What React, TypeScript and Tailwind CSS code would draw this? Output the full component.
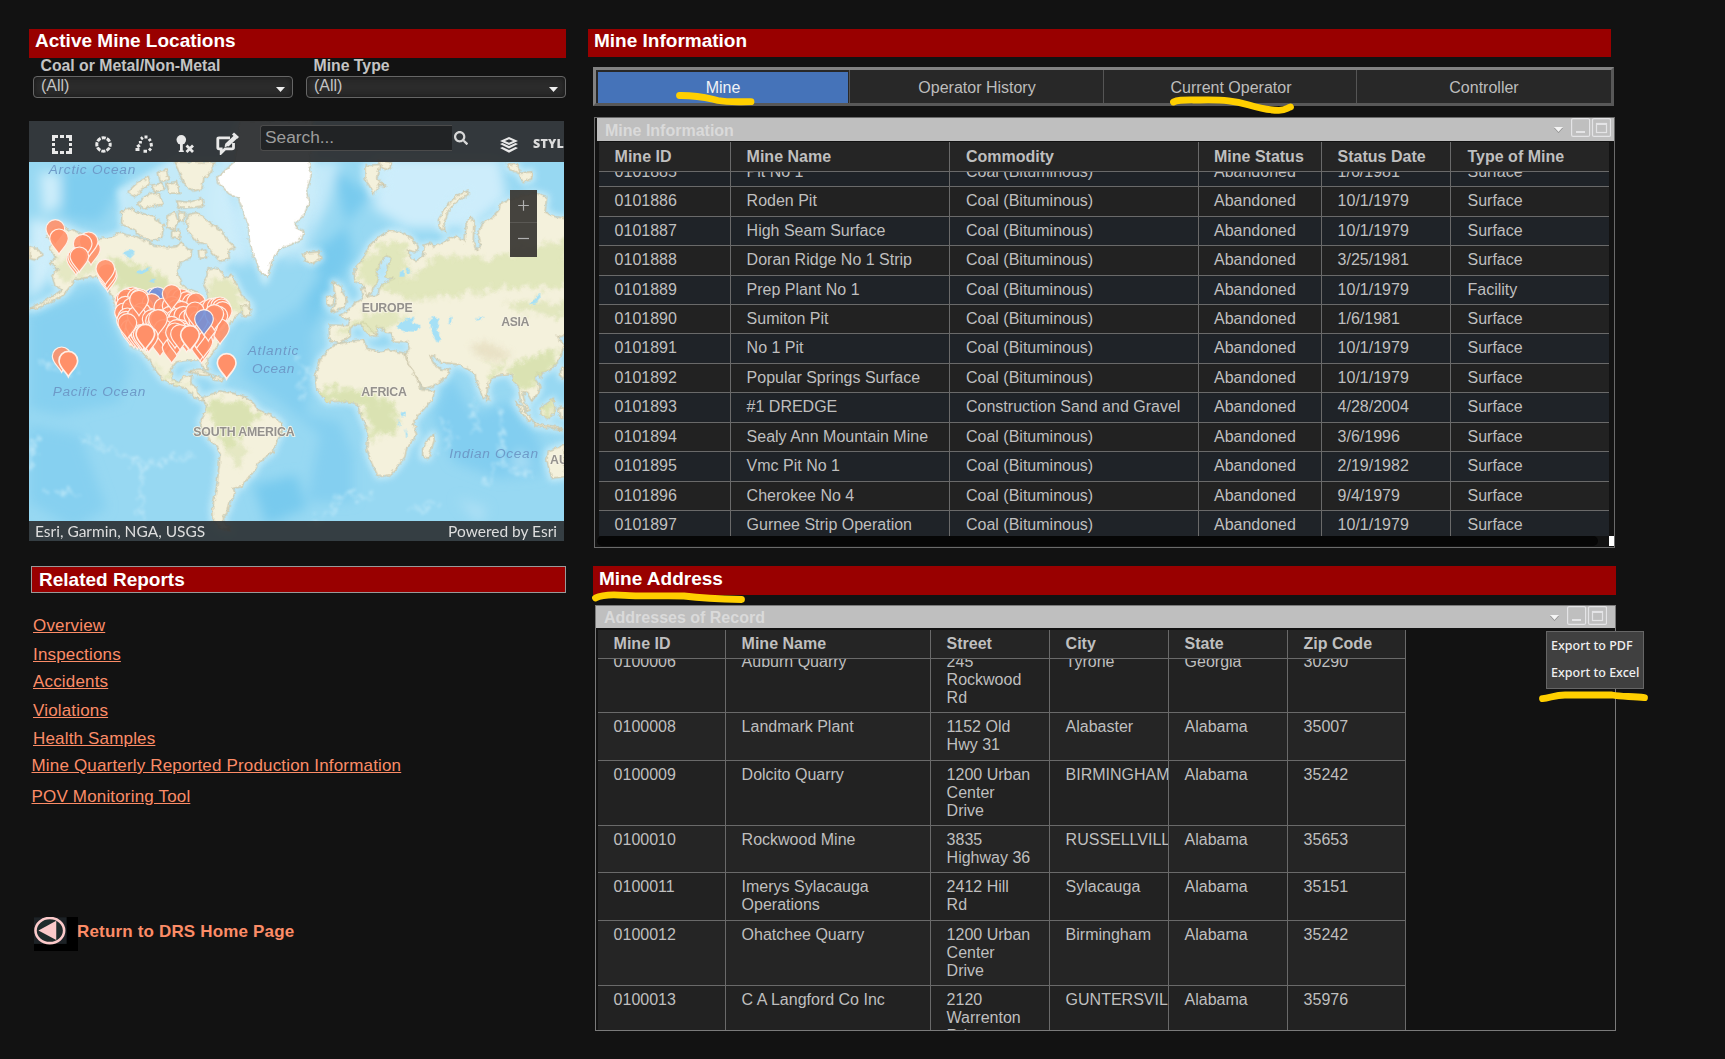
import React from "react";
import { FaSearch } from "react-icons/fa";

const mineCols = ["Mine ID", "Mine Name", "Commodity", "Mine Status", "Status Date", "Type of Mine"];
const mines = [
  ["0101885", "Pit No 1", "Coal (Bituminous)", "Abandoned", "1/6/1981", "Surface"],
  ["0101886", "Roden Pit", "Coal (Bituminous)", "Abandoned", "10/1/1979", "Surface"],
  ["0101887", "High Seam Surface", "Coal (Bituminous)", "Abandoned", "10/1/1979", "Surface"],
  ["0101888", "Doran Ridge No 1 Strip", "Coal (Bituminous)", "Abandoned", "3/25/1981", "Surface"],
  ["0101889", "Prep Plant No 1", "Coal (Bituminous)", "Abandoned", "10/1/1979", "Facility"],
  ["0101890", "Sumiton Pit", "Coal (Bituminous)", "Abandoned", "1/6/1981", "Surface"],
  ["0101891", "No 1 Pit", "Coal (Bituminous)", "Abandoned", "10/1/1979", "Surface"],
  ["0101892", "Popular Springs Surface", "Coal (Bituminous)", "Abandoned", "10/1/1979", "Surface"],
  ["0101893", "#1 DREDGE", "Construction Sand and Gravel", "Abandoned", "4/28/2004", "Surface"],
  ["0101894", "Sealy Ann Mountain Mine", "Coal (Bituminous)", "Abandoned", "3/6/1996", "Surface"],
  ["0101895", "Vmc Pit No 1", "Coal (Bituminous)", "Abandoned", "2/19/1982", "Surface"],
  ["0101896", "Cherokee No 4", "Coal (Bituminous)", "Abandoned", "9/4/1979", "Surface"],
  ["0101897", "Gurnee Strip Operation", "Coal (Bituminous)", "Abandoned", "10/1/1979", "Surface"],
];

const addressCols = ["Mine ID", "Mine Name", "Street", "City", "State", "Zip Code"];
const addresses = [
  ["0100006", "Auburn Quarry", "245\nRockwood\nRd", "Tyrone", "Georgia", "30290"],
  ["0100008", "Landmark Plant", "1152 Old\nHwy 31", "Alabaster", "Alabama", "35007"],
  ["0100009", "Dolcito Quarry", "1200 Urban\nCenter\nDrive", "BIRMINGHAM", "Alabama", "35242"],
  ["0100010", "Rockwood Mine", "3835\nHighway 36", "RUSSELLVILLE", "Alabama", "35653"],
  ["0100011", "Imerys Sylacauga\nOperations", "2412 Hill\nRd", "Sylacauga", "Alabama", "35151"],
  ["0100012", "Ohatchee Quarry", "1200 Urban\nCenter\nDrive", "Birmingham", "Alabama", "35242"],
  ["0100013", "C A Langford Co Inc", "2120\nWarrenton\nRd", "GUNTERSVILLE", "Alabama", "35976"],
];

function Pin({ x, y, blue = false, solid = false }: { x: number; y: number; blue?: boolean; solid?: boolean }) {
  return (
    <path
      transform={`translate(${x} ${y})`}
      d="M0 0C-7 -15 -28 -28 -28 -48a28 28 0 0 1 56 0C28 -28 7 -15 0 0Z"
      fill={blue ? "#7390d8" : "#ff9069"}
      fillOpacity={solid ? 1 : 0.9}
      stroke="#fff0e8"
      strokeWidth={solid ? 5 : 3.6}
    />
  );
}

const pins: [number, number, boolean?][] = [
  [106, 390], [117, 418], [184, 462, true], [213, 450], [203, 430], [206, 427], [188, 434], [168, 480], [172, 474], [178, 472], [263, 530], [261, 522], [256, 509],
  [330, 594], [338, 592], [313, 604], [320, 598], [350, 596], [316, 620], [312, 640], [335, 625], [322, 655], [318, 665], [330, 690], [342, 698],
  [400, 595, true], [413, 592, true], [372, 625], [360, 598], [395, 612], [388, 655, true], [352, 702], [345, 680], [470, 595], [485, 598], [500, 606], [515, 612], [528, 610], [440, 640], [430, 625],
  [455, 620], [470, 630], [485, 635], [450, 650], [465, 660],
  [365, 640], [350, 650], [395, 660], [405, 665], [412, 670], [420, 660], [362, 705], [380, 712], [388, 712], [475, 655], [490, 650], [505, 660], [520, 650],
  [455, 680], [450, 700], [440, 720], [420, 725], [455, 745], [470, 720], [480, 690], [490, 700], [500, 712], [430, 690], [560, 632], [575, 626], [590, 624], [600, 622], [605, 628], [608, 636],
  [570, 660], [585, 655], [590, 660], [595, 650], [600, 688], [560, 690], [555, 715], [545, 745], [540, 738], [550, 728], [530, 700], [470, 690], [465, 700], [480, 705],
  [580, 648], [565, 678], [535, 665], [525, 637],
];

function WorldMap() {
  return (
    <svg className="absolute inset-0 h-full w-full" viewBox="27 18 1605 1260" preserveAspectRatio="none">
      <defs>
        <filter id="coast" x="-5%" y="-5%" width="110%" height="110%">
          <feTurbulence type="fractalNoise" baseFrequency="0.07" numOctaves="3" seed="4" result="n" />
          <feDisplacementMap in="SourceGraphic" in2="n" scale="14" xChannelSelector="R" yChannelSelector="G" />
        </filter>
        <filter id="soft" x="-50%" y="-50%" width="200%" height="200%">
          <feGaussianBlur stdDeviation="18" />
        </filter>
        <filter id="soft2" x="-50%" y="-50%" width="200%" height="200%">
          <feGaussianBlur stdDeviation="9" />
        </filter>
        <filter id="mottle" x="-20%" y="-20%" width="140%" height="140%">
          <feTurbulence type="fractalNoise" baseFrequency="0.045" numOctaves="3" seed="8" result="n" />
          <feDisplacementMap in="SourceGraphic" in2="n" scale="70" xChannelSelector="R" yChannelSelector="G" />
          <feGaussianBlur stdDeviation="5" />
        </filter>
        <g id="land">
          <path d="M92 345L110 335L150 345L200 360L240 372L275 365L300 352L320 360L350 365L380 378L400 390L440 398L470 395L485 380L500 400L515 405L510 430L480 442L472 475L490 515L528 530L545 545L550 572L560 575L565 535L550 505L562 480L560 462L580 458L600 466L615 490L635 480L650 510L668 545L690 565L695 585L660 590L640 612L625 630L605 650L595 690L578 715L560 735L565 765L550 762L540 735L505 735L470 740L452 765L458 795L475 802L490 785L515 780L512 805L530 820L535 840L555 852L548 858L525 848L500 820L465 812L430 795L410 770L390 740L370 715L355 700L335 695L310 650L290 600L285 560L270 530L250 500L225 483L190 490L165 490L150 515L130 540L90 560L50 580L27 582L90 550L125 525L105 510L95 480L115 465L90 440L110 425L88 405L98 385L80 360Z" />
          <path d="M548 850L570 838L600 828L640 835L680 847L700 865L715 885L760 905L785 925L787 950L767 985L760 1010L740 1025L715 1045L700 1075L680 1090L665 1115L640 1120L645 1135L630 1160L625 1185L610 1205L612 1220L630 1245L600 1240L580 1215L578 1175L590 1115L597 1055L600 1015L590 995L570 975L550 945L540 920L550 905L560 875Z" />
          <path d="M322 232L350 205L385 185L390 205L365 222L345 245ZM352 268L375 245L400 232L418 240L430 268L400 272L370 280ZM305 288L330 280L355 292L400 305L432 330L425 368L395 378L355 358L345 345L305 328ZM500 300L530 293L562 318L600 345L622 375L645 398L625 405L628 432L600 438L575 412L560 388L530 380L502 345ZM462 141L585 141L570 178L552 190L545 222L520 228L490 205L478 172ZM470 258L508 262L545 248L552 272L510 278L478 280ZM445 300L465 292L475 320L460 345L440 335ZM475 290L495 292L490 322L478 318ZM415 170L440 165L445 195L420 200ZM440 205L470 200L480 235L448 235ZM395 210L425 205L435 222L405 232ZM455 350L478 345L480 372L455 368ZM535 408L555 405L560 428L538 430ZM27 395L50 400L68 418L45 435L27 430ZM662 570L690 575L692 600L668 603ZM500 768L545 765L580 782L545 778ZM580 785L612 788L605 797L580 795Z" />
          <path d="M1005 500L1002 465L1025 440L1050 390L1075 365L1110 348L1145 350L1175 370L1195 395L1190 412L1162 405L1172 430L1190 437L1210 422L1213 390L1228 385L1240 397L1280 375L1310 362L1335 382L1338 330L1350 305L1362 320L1360 375L1368 405L1382 390L1374 350L1390 322L1415 310L1435 290L1440 268L1480 250L1540 233L1580 245L1575 292L1605 305L1640 312L1640 660L1622 665L1610 662L1632 690L1625 715L1610 745L1590 765L1565 772L1545 782L1545 792L1560 815L1555 835L1535 858L1520 832L1508 830L1515 865L1530 885L1522 888L1502 860L1495 815L1480 800L1472 775L1445 780L1420 785L1405 805L1400 840L1390 850L1375 815L1365 780L1350 765L1320 750L1290 745L1262 742L1240 722L1230 722L1245 750L1262 762L1290 765L1270 795L1240 812L1210 822L1195 795L1172 760L1155 722L1168 700L1160 680L1120 678L1115 655L1095 650L1085 640L1070 632L1072 660L1048 640L1025 625L1005 628L990 640L990 665L960 682L930 680L927 630L985 632L990 615L960 600L978 590L1010 562L1030 550L1022 520L1032 518L1040 545L1075 540L1078 518L1092 505L1125 490L1095 488L1102 460L1112 428L1100 418L1085 440L1068 470L1075 495L1060 525L1040 545L1030 510Z" />
          <path d="M940 690L1000 677L1030 675L1040 700L1080 710L1110 705L1155 715L1160 735L1185 778L1205 825L1245 828L1235 855L1200 895L1180 925L1190 960L1160 1000L1155 1025L1130 1060L1110 1080L1075 1085L1055 1045L1040 1000L1045 955L1025 905L1010 865L975 858L920 860L890 822L886 775L900 735Z" />
          <path d="M1240 957L1243 975L1225 1030L1208 1027L1208 1000L1220 978ZM940 500L960 512L982 560L975 578L935 590L950 560L942 525ZM920 545L942 542L940 568L922 572ZM850 415L895 410L903 430L875 447L855 435ZM1035 152L1080 148L1070 190L1098 215L1078 208L1060 238L1035 190ZM1075 135L1118 145L1105 165L1080 155ZM1342 228L1305 245L1275 280L1255 315L1258 335L1275 350L1272 322L1290 278L1320 252L1345 238ZM1460 145L1490 150L1500 175L1535 170L1535 195L1510 200L1495 175L1465 160ZM1634 990L1585 1008L1580 1035L1595 1090L1634 1085ZM1485 858L1510 880L1540 922L1522 915L1500 885ZM1545 925L1610 935L1632 945L1600 940L1545 932ZM1560 880L1600 853L1605 885L1590 910L1565 902ZM1402 840L1410 855L1400 858ZM1018 625L1030 620L1070 662L1052 665ZM1550 775L1565 772L1562 788ZM1622 760L1632 755L1632 790L1622 785ZM1612 880L1632 875L1632 910L1620 905Z" />
        </g>
        <mask id="landmask" maskUnits="userSpaceOnUse" x="0" y="0" width="1660" height="1290">
          <use href="#land" fill="white" />
        </mask>
      </defs>
      <rect x="27" y="18" width="1605" height="1260" fill="#97d8f2" />
      <g filter="url(#soft)">
        <path d="M130 160L300 141L310 200L240 320L130 310Z" fill="#7fcdef" />
        <path d="M27 600L230 520L280 640L330 760L300 860L120 900L27 880Z" fill="#86d0f0" />
        <path d="M27 930L180 960L260 1180L160 1240L27 1160Z" fill="#86d0f0" />
        <path d="M940 160L1050 240L960 350L870 420L900 480L800 640L700 760L790 860L890 620L1000 420Z" fill="#78caee" />
        <path d="M690 660L860 560L880 680L860 900L960 920L1000 1020L1000 1160L860 1160L900 960L780 860L660 780Z" fill="#84cff0" />
        <path d="M700 1110L830 1080L860 1180L740 1230Z" fill="#78caee" />
        <path d="M1290 780L1360 900L1470 860L1560 980L1560 1080L1430 1090L1300 1040L1240 900Z" fill="#82cef0" />
        <path d="M60 170L120 180L120 270L70 300ZM27 310L150 330L100 480L27 560Z" fill="#cfeefb" />
        <path d="M1070 130L1440 130L1460 250L1350 340L1160 340L1060 280Z" fill="#cdedfb" />
        <path d="M860 140L960 140L920 280L840 430L780 440L860 350Z" fill="#c3e9f9" />
        <path d="M580 150L680 300L700 440L640 450L560 300Z" fill="#c8ebfa" />
        <path d="M1470 1060L1500 1000L1540 1060ZM1310 1150L1400 1180L1380 1230Z" fill="#aee0f5" />
      </g>
      <g filter="url(#soft2)" stroke="#cdeefa" strokeWidth="20" strokeLinejoin="round" fill="#cdeefa" opacity=".85">
        <use href="#land" />
        <path d="M590 190L655 250L690 390L735 500L760 430L840 385L880 240L870 18L660 18Z" />
        <path d="M300 230L480 130L600 200L640 400L560 560L480 520L320 340Z" />
      </g>
      <g filter="url(#mottle)" fill="none" stroke="#c8ecfa" strokeWidth="7" opacity=".8">
        <path d="M190 970L260 1000L370 1050L520 1020M370 1050L360 1250M800 700L860 760L840 860M1260 910L1300 960L1270 1010M1360 860L1370 940L1350 960M1440 870L1450 1060L1540 1080M1430 1040L1390 1120M1180 1180L1260 1165M90 1130L180 1140M880 1230L980 1140L1060 1150" />
        <path d="M60 735L110 760L180 770M50 960L30 1060" />
      </g>
      <g filter="url(#coast)">
        <use href="#land" fill="#f4f1dc" stroke="#cdc7ab" strokeWidth="4" />
        <g mask="url(#landmask)">
          <g filter="url(#mottle)" fill="#d5e0aa" opacity=".85">
            <path d="M110 430L230 400L240 470L130 500Z" opacity=".6" />
            <path d="M270 420L400 470L480 520L540 560L470 570L290 520Z" />
            <path d="M560 490L640 500L680 580L590 600Z" opacity=".7" />
            <path d="M570 850L680 860L720 920L660 960L620 1010L570 900Z" />
            <path d="M620 990L680 990L660 1060L625 1030Z" opacity=".6" />
            <path d="M1030 430L1100 380L1160 390L1160 500L1250 420L1400 430L1640 370L1640 520L1480 520L1300 540L1180 560L1010 490Z" opacity=".75" />
            <path d="M960 640L1060 590L1180 600L1100 650L960 670Z" opacity=".7" />
            <path d="M890 825L1000 820L1120 860L1140 950L1060 970L1020 870L900 860Z" />
            <path d="M1450 560L1640 560L1640 610L1500 590Z" opacity=".7" />
            <path d="M1480 740L1620 700L1600 770L1500 830L1470 790ZM1400 770L1440 765L1420 790Z" />
            <path d="M1370 730L1460 745L1440 755ZM1560 860L1610 860L1600 910L1560 900Z" />
            <path d="M390 740L470 800L540 840L450 800Z" />
          </g>
          <path d="M1350 690L1400 680L1480 720L1430 740L1370 720Z" fill="#e2d8b8" opacity=".6" filter="url(#soft2)" />
        </g>
        <g fill="#a5e0f6">
          <path d="M308 412L330 404L345 412L328 430L315 422ZM352 468L392 455L375 475L355 480ZM385 497L408 490L400 503ZM1135 625L1150 615L1185 608L1175 622L1205 632L1190 650L1150 648L1132 640ZM1228 615L1245 605L1260 615L1250 640L1265 672L1250 682L1238 660ZM1288 610L1298 605L1296 625L1286 628ZM1140 470L1152 466L1150 485L1138 485ZM1158 458L1168 458L1170 475L1160 475ZM1368 610L1398 605L1372 617ZM1530 568L1560 535L1562 545L1542 570ZM1142 892L1158 890L1156 902L1144 904ZM1130 910L1142 930L1138 935ZM1155 940L1164 965L1158 965Z" />
        </g>
        <path d="M660 18L645 141L590 188L596 202L625 235L655 250L668 290L685 330L688 375L702 430L725 476L742 486L755 440L780 402L815 388L845 372L852 350L828 338L825 325L852 300L868 260L862 222L874 180L868 141L880 18Z" fill="#ffffff" stroke="#cdc7ab" strokeWidth="3.5" />
      </g>

      <g fontFamily="'Liberation Sans', Arial, sans-serif">
        <g fill="#6e9ac8" fontStyle="italic" fontSize="41">
          <text x="86" y="177" textLength="260">Arctic Ocean</text>
          <text x="98" y="844" textLength="278">Pacific Ocean</text>
          <text x="683" y="721" textLength="152">Atlantic</text>
          <text x="696" y="773" textLength="127">Ocean</text>
          <text x="1288" y="1028" textLength="266">Indian Ocean</text>
        </g>
        <g fill="#94918d" fontWeight="bold" fontSize="37" stroke="#f6f3e4" strokeWidth="5" paintOrder="stroke">
          <text x="1025" y="590" textLength="153">EUROPE</text>
          <text x="1444" y="634" textLength="84">ASIA</text>
          <text x="1024" y="844" textLength="137">AFRICA</text>
          <text x="520" y="964" textLength="304">SOUTH AMERICA</text>
          <text x="1590" y="1046">AUSTRALIA</text>
        </g>
      </g>

      {pins.map(([x, y, blue], i) => (
        <Pin key={i} x={x} y={y} blue={!!blue} />
      ))}
      <Pin x={357} y={602} />
      <Pin x={455} y={585} />
      <Pin x={414} y={660} />
      <Pin x={583} y={645} />
      <Pin x={322} y={672} />
      <Pin x={552} y={660} blue />
      <Pin x={368} y={706} />
      <Pin x={386} y={712} />
      <Pin x={376} y={704} solid />
      <Pin x={510} y={708} solid />
      <Pin x={125} y={772} />
      <Pin x={145} y={785} solid />
      <Pin x={620} y={792} solid />
    </svg>
  );
}

const iconFill = "#e9e9e9";

function MapToolbar() {
  return (
    <div className="relative flex h-[41px] overflow-hidden bg-[#2d2f31]/95">
      <svg className="mt-[14px] ml-[23px] h-[19px] w-[20px] shrink-0" viewBox="0 0 20 19" fill={iconFill}>
        <path d="M0 0h6v3H3v3H0zM14 0h6v6h-3V3h-3zM0 13h3v3h3v3H0zM17 13h3v6h-6v-3h3zM8 0h4v3H8zM8 16h4v3H8zM0 8h3v3H0zM17 8h3v3h-3z" />
      </svg>
      <svg className="mt-[15px] ml-[23px] h-[17px] w-[17px] shrink-0" viewBox="0 0 17 17" fill="none" stroke={iconFill} strokeWidth="3">
        <circle cx="8.5" cy="8.5" r="6.7" strokeDasharray="4.1 1.16" strokeDashoffset="2" />
      </svg>
      <svg className="mt-[14px] ml-[22px] h-[18px] w-[19px] shrink-0" viewBox="0 0 19 18" fill="none" stroke={iconFill} strokeWidth="3">
        <path d="M7 4L8.800 2.500M10.500 2h3M15 3.800l1.500 2.200M17 8l.5 3.500M17 13.500l-2 2M13 16.200H9.500M6.300 6l.2 2.500M5.800 10l-2.600 2M1.500 14.500h4" />
      </svg>
      <svg className="mt-[14px] ml-[23px] h-[18px] w-[18px] shrink-0" viewBox="0 0 18 18" fill={iconFill}>
        <circle cx="5.3" cy="4.8" r="4.8" />
        <path d="M4 9h2.800v7H4zM2.800 15.500h5V17h-5z" />
        <path d="M10.500 10.500l6.500 6.500M17 10.500L10.500 17" stroke={iconFill} strokeWidth="2.800" />
      </svg>
      <svg className="mt-[11px] ml-[22px] h-[23px] w-[23px] shrink-0" viewBox="0 0 23 23" fill="none" stroke={iconFill}>
        <path d="M14 5.800H3Q1.800 5.800 1.800 7v8.500Q1.800 16.800 3 16.800h2.200v4l4-4h6.800Q17.500 16.800 17.500 15.500V11" strokeWidth="2.800" />
        <path d="M11 13l8.500-8" strokeWidth="4.400" />
        <path d="M17 1.500l5 4.500" strokeWidth="3" />
        <path d="M9 14.500l1-3 2.200 2z" fill={iconFill} />
      </svg>
      <div className="mt-[4px] ml-[21px] flex h-[26px] w-[192px] shrink-0 items-center rounded-l-[3px] border border-r-0 border-[#4b4b4b] bg-[#212325] pl-[4px] text-[17.300px] text-[#9d9d9d]">
        <span>Search...</span>
      </div>
      <FaSearch className="mt-[10px] ml-[2px] h-[14px] w-[14px] shrink-0 text-[#d8d8d8]" />
      <svg className="mt-[16px] ml-[32px] h-[16px] w-[18px] shrink-0" viewBox="0 0 18 16" fill={iconFill}>
        <path fillRule="evenodd" d="M9 0l9 4-9 4-9-4zM9 2.200L5 4 9 5.800 13 4z" />
        <path d="M0 7l2.500-1L9 9l6.500-3L18 7l-9 4.500zM0 11l2.500-1L9 13l6.500-3L18 11l-9 4.700z" />
      </svg>
      <span className="mt-[14px] ml-[15px] font-['Open_Sans'] text-[12.500px] leading-[18px] font-extrabold tracking-[0.200px] text-[#dcdcdc]">STYLE</span>
    </div>
  );
}

function Select({ label }: { label: string }) {
  return (
    <div className="w-[260px]">
      <div className="h-[18px] pl-[7.500px] text-[15.800px] leading-[16px] font-bold text-[#c4c4c4]">{label}</div>
      <div className="flex h-[22px] items-center justify-between rounded-[4px] border border-[#666] bg-[#2b2b2b] pr-[7px] pl-[7px] text-[16px] text-[#c4c4c4] shadow-[inset_0_0_6px_#161616]">
        <span className="-mt-[2px] leading-[18px]">(All)</span>
        <svg className="mt-[5px] h-[5px] w-[9px]" viewBox="0 0 9 5">
          <path d="M0 0h9L4.500 5z" fill="#eee" />
        </svg>
      </div>
    </div>
  );
}

function TitleBar({ title, className }: { title: string; className: string }) {
  return (
    <div className={`flex items-start bg-[#bfbfbf] text-[16px] font-bold text-[#dadada] ${className}`}>
      <span className="flex-1">{title}</span>
      <svg className="mt-[9px] mr-[8px] h-[6px] w-[9px]" viewBox="0 0 9 6">
        <path d="M0 1h9L4.500 6z" fill="#8c8c8c" />
        <path d="M0 0h9L4.500 5z" fill="#f4f4f4" />
      </svg>
      <svg className="h-[19px] w-[40px]" viewBox="0 0 40 19" fill="none" stroke="#e4e4e6" strokeWidth="1.200">
        <rect x=".6" y=".6" width="18" height="17.800" rx="1.500" />
        <rect x="21.500" y=".6" width="18" height="17.800" rx="1.500" />
        <path d="M5 14h9" strokeWidth="2" />
        <rect x="25.500" y="5.500" width="10" height="9" />
        <path d="M25 6h11" strokeWidth="2" />
      </svg>
    </div>
  );
}

function HeaderRow({ cols, grid }: { cols: string[]; grid: string }) {
  return (
    <div className={`relative grid border-b border-[#6a6a6a] bg-[#252525] font-bold ${grid}`}>
      {cols.map((c) => (
        <div key={c} className="border-r border-[#6a6a6a] pl-[15.600px] leading-[18px] last:border-r-0">
          {c}
        </div>
      ))}
    </div>
  );
}

function MineTable() {
  const grid = "grid-cols-[132px_219px_249px_123px_129px_158px] [&>div:nth-child(3)]:pl-[16px] [&>div:nth-child(4)]:pl-[15px] [&>div:nth-child(6)]:pl-[16.500px]";
  return (
    <div className="ml-[4px] h-[394px] w-[1010px] overflow-hidden text-[16px] text-[#bfbfbf]">
      <HeaderRow cols={mineCols} grid={`${grid} h-[30px] [&>div]:pt-[6px]`} />
      <div className="h-[364px] overflow-hidden">
        <div className="-mt-[14.200px]">
          {mines.map((row, r) => (
            <div key={row[0]} className={`grid h-[29.450px] border-b border-[#6a6a6a] ${grid} ${r % 2 ? "bg-[#222222]" : "bg-[#1f2328]"}`}>
              {row.map((cell, c) => (
                <div key={c} className="border-r border-[#6a6a6a] pt-[5px] pl-[15.600px] leading-[18px] whitespace-nowrap last:border-r-0">
                  {cell}
                </div>
              ))}
            </div>
          ))}
        </div>
      </div>
    </div>
  );
}

function AddressTable() {
  const grid = "grid-cols-[128px_205px_119px_119px_119px_118px]";
  return (
    <div className="mt-[2px] ml-[2px] h-[400px] w-[808px] overflow-hidden border-r border-[#6a6a6a] text-[16px] text-[#bfbfbf]">
      <HeaderRow cols={addressCols} grid={`${grid} h-[29px] [&>div]:pt-[5px]`} />
      <div className="h-[371px] overflow-hidden">
        <div className="-mt-[11.300px]">
          {addresses.map((row, r) => (
            <div key={row[0]} className={`grid border-b border-[#6a6a6a] ${grid} ${r % 2 ? "bg-[#252525]" : "bg-[#222222]"}`}>
              {row.map((cell, c) => (
                <div key={c} className="overflow-hidden border-r border-[#6a6a6a] pt-[5px] pb-[5.450px] pl-[15.600px] leading-[18px] whitespace-pre last:border-r-0">
                  {cell}
                </div>
              ))}
            </div>
          ))}
        </div>
      </div>
    </div>
  );
}

const links: [string, string][] = [
  ["Overview", "mt-[23px] ml-[4px]"],
  ["Inspections", "mt-[9px] ml-[4px]"],
  ["Accidents", "mt-[7px] ml-[4px]"],
  ["Violations", "mt-[9px] ml-[4px]"],
  ["Health Samples", "mt-[8px] ml-[4px]"],
  ["Mine Quarterly Reported Production Information", "mt-[7px] ml-[2.500px]"],
  ["POV Monitoring Tool", "mt-[11px] ml-[2.500px]"],
];

function LeftColumn() {
  return (
    <div className="flex w-[537px] flex-col">
      <h2 className="h-[29px] bg-[#990000] pl-[6px] text-[19px] leading-[23px] font-bold text-white">Active Mine Locations</h2>
      <div className="flex justify-between pl-[4px]">
        <Select label="Coal or Metal/Non-Metal" />
        <Select label="Mine Type" />
      </div>
      <div className="relative mt-[23px] flex h-[420px] w-[535px] flex-col overflow-hidden">
        <WorldMap />
        <MapToolbar />
        <div className="absolute top-[69px] left-[481px] flex h-[67px] w-[27px] flex-col items-center bg-[#3b3935]/95 text-[#b0b0b0]">
          <svg className="h-[33px] w-full border-b border-[#5a5854]" viewBox="0 0 27 33" stroke="currentColor" strokeWidth="1.200">
            <path d="M8 16h11M13.500 10.500v11" />
          </svg>
          <svg className="h-[33px] w-full" viewBox="0 0 27 33" stroke="currentColor" strokeWidth="1.200">
            <path d="M8 15.500h11" />
          </svg>
        </div>
        <div className="relative mt-auto flex h-[20px] items-center justify-between bg-[#2a2d30]/90 pr-[7px] pl-[6px] font-[Lato] text-[15.500px] leading-[20px] text-[#dedede]">
          <span>Esri, Garmin, NGA, USGS</span>
          <span>Powered by Esri</span>
        </div>
      </div>
      <h2 className="mt-[25px] ml-[2px] h-[27px] border border-[#999] bg-[#990000] pl-[7px] text-[19px] leading-[26px] font-bold text-white">Related Reports</h2>
      <nav className="flex flex-col items-start">
        {links.map(([label, pos]) => (
          <a key={label} href="#" className={`text-[17px] leading-[20px] tracking-[0.170px] text-[#fc8c67] underline ${pos}`}>
            {label}
          </a>
        ))}
      </nav>
      <div className="mt-[110px] ml-[5px] flex">
        <svg className="h-[34px] w-[43.500px] bg-black" viewBox="0 0 44 34">
          <rect width="33" height="27" fill="#1d2226" />
          <ellipse cx="16" cy="13.500" rx="14.500" ry="12.700" fill="#202b2b" stroke="#fccaca" strokeWidth="2.600" />
          <path d="M4.500 13.500L22.500 3.500v19.500z" fill="#fccaca" />
        </svg>
        <a href="#" className="mt-[4px] -ml-[0.500px] text-[17px] leading-[22px] font-bold tracking-[0.170px] text-[#fc8c67]">Return to DRS Home Page</a>
      </div>
    </div>
  );
}

function RightColumn() {
  return (
    <div className="ml-[22px] flex w-[1060px] flex-col">
      <h2 className="h-[28px] w-[1023px] bg-[#990000] pl-[6px] text-[19px] leading-[23px] font-bold text-white">Mine Information</h2>
      <div className="mt-[10px] ml-[5px] grid h-[39px] w-[1021px] grid-cols-[254px_254px_253px_254px] border-[3px] border-t-[#828282] border-r-[#585858] border-b-[#585858] border-l-[#828282] bg-[#282828] text-center text-[16px] leading-[27px] text-[#bdbdbd]">
        <div className="flex border-r border-[#555] pt-[2px] pr-[1px] pl-[2px]">
          <div className="flex-1 bg-[#4573b9] leading-[25px] text-[#f0f2f6]">
            <span className="relative top-[3px]">Mine</span>
          </div>
        </div>
        <div className="border-r border-[#555] pt-[4px] pl-[1px]">Operator History</div>
        <div className="border-r border-[#555] pt-[4px] pl-[2px]">Current Operator</div>
        <div className="pt-[4px]">Controller</div>
      </div>
      <section className="mt-[11px] ml-[6px] flex h-[431px] w-[1021px] flex-col border border-[#6a6a6a]">
        <TitleBar title="Mine Information" className="mb-px ml-[2px] h-[23px] pr-[3px] pl-[8px] leading-[26px]" />
        <MineTable />
        <div className="ml-[2px] flex h-[10px] justify-between">
          <div className="w-[1001px] rounded-full bg-[#060606]" />
          <div className="w-[5px] bg-white" />
        </div>
      </section>
      <h2 className="mt-[18px] ml-[5px] h-[29px] w-[1023px] bg-[#990000] pl-[6px] text-[19px] leading-[25px] font-bold text-white">Mine Address</h2>
      <section className="relative mt-[10px] ml-[7px] h-[426px] w-[1021px] border border-[#7a7a7a]">
        <TitleBar title="Addresses of Record" className="h-[22px] pr-[8px] pl-[8px] leading-[24px]" />
        <AddressTable />
        <div className="absolute top-[25px] left-[950px] flex h-[58px] w-[98px] flex-col border border-[#666] bg-[#404040] pl-[4px] font-['Noto_Sans'] text-[12.500px] leading-[27px] font-medium text-[#f0f0f0]">
          <span className="whitespace-nowrap">Export to PDF</span>
          <span className="whitespace-nowrap">Export to Excel</span>
        </div>
      </section>
    </div>
  );
}

function Highlights() {
  return (
    <svg className="pointer-events-none absolute inset-0 h-full w-full" viewBox="0 0 1725 1059" fill="none" stroke="#ffcf00" strokeWidth="6.800" strokeLinecap="round" strokeLinejoin="round">
      <path d="M679.500 95.500C700 95.300 707 98 718 100.500C728 102.300 735 101.700 751 101.700" />
      <path d="M1173.500 102C1178 99.500 1184 100 1200 100C1225 99.500 1235 101 1249 105C1262 109 1268 110.300 1279 110.300C1286 110.300 1287 108 1290.500 107" />
      <path d="M595.500 598C602 594.500 610 594 625 595.300C640 596.500 665 595.500 684 596C705 598.500 720 599 741.500 599.500" />
      <path d="M1542.500 698.700C1550 698 1555 695 1565 695L1612 695C1622 697 1632 696 1644.500 697.700" />
    </svg>
  );
}

export default function App() {
  return (
    <div className="relative flex h-[1059px] w-[1725px] overflow-hidden bg-[#121212] pt-[29px] pl-[29px] font-['Liberation_Sans',Arial,sans-serif]">
      <LeftColumn />
      <RightColumn />
      <Highlights />
    </div>
  );
}
